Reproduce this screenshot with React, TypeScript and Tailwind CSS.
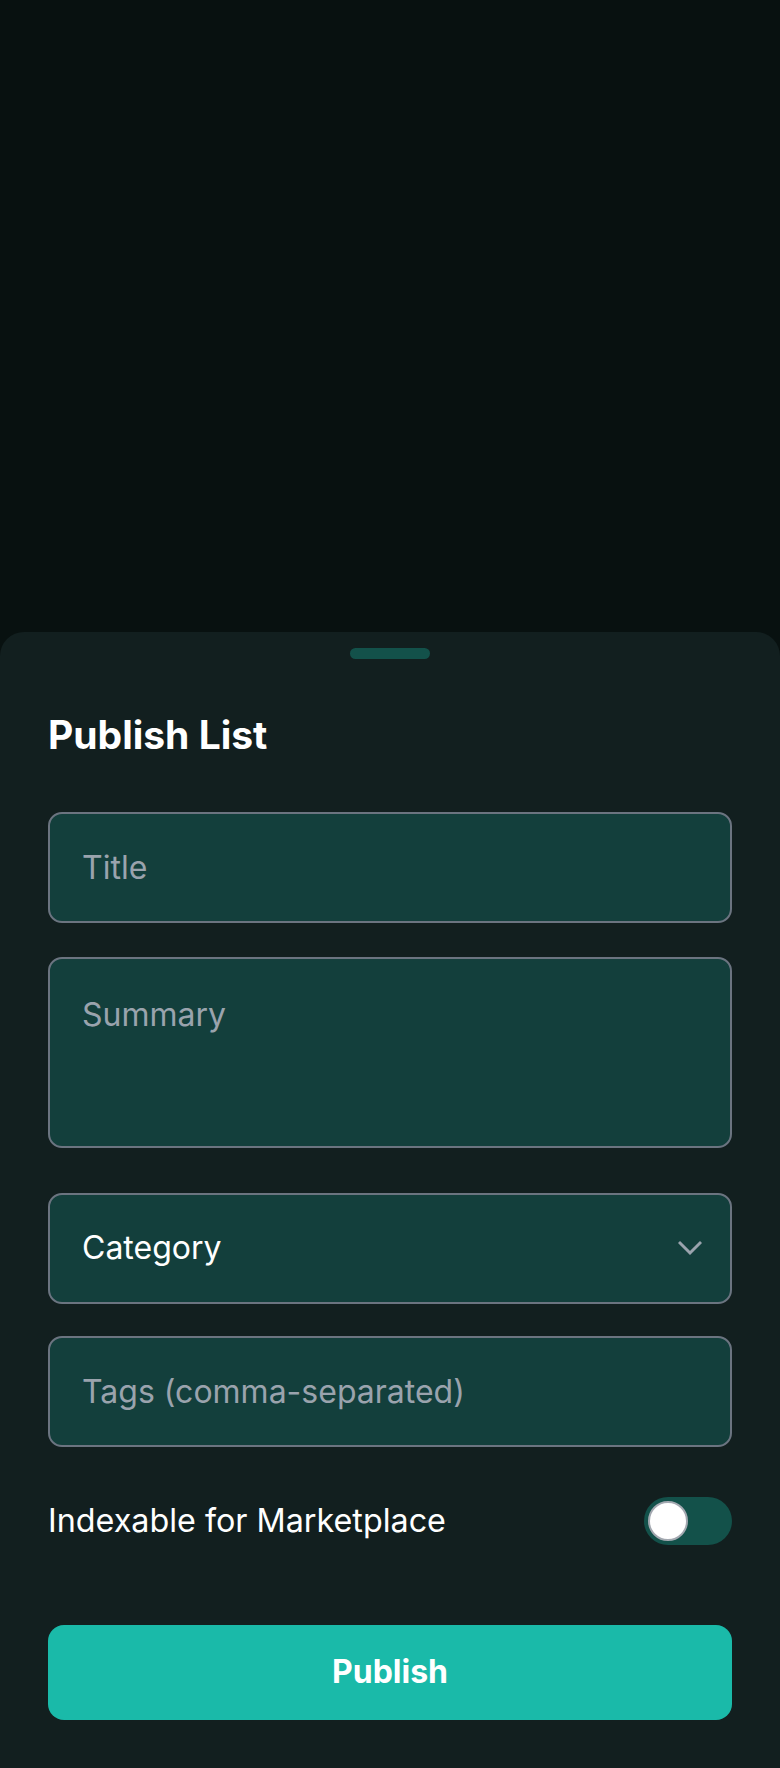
import React, { useState } from 'react';

const inputClass =
    "w-full h-[111px] rounded-[14px] border-2 border-[#6b7480] bg-[#133f3c] pl-[32px] pr-[32px] text-[32px] leading-[40px] text-white placeholder:text-[#9aa3ad] outline-none";

export default function App() {
    const [indexable, setIndexable] = useState(false);

    return (
        <div
            className="min-h-[1768px] flex flex-col bg-[#081110]"
            style={{ fontFamily: 'Inter, "Noto Sans", sans-serif' }}
        >
            {/* empty backdrop above the sheet */}
            <div className="flex-1" />

            {/* Bottom sheet */}
            <div className="h-[1136px] bg-[#121f1f] rounded-t-[24px] px-[48px] pt-[16px] pb-[48px] flex flex-col">
                <div className="w-[80px] h-[11px] rounded-full bg-[#13514a] mx-auto" />

                <h2 className="mt-[52px] text-[39px] leading-[48px] font-bold text-white">
                    Publish List
                </h2>

                <div className="mt-[53px] flex flex-col">
                    <input className={inputClass} placeholder="Title" />

                    <textarea
                        className="mt-[34px] w-full h-[191px] resize-none rounded-[14px] border-2 border-[#6b7480] bg-[#133f3c] px-[32px] pt-[36px] text-[32px] leading-[40px] text-white placeholder:text-[#9aa3ad] outline-none"
                        placeholder="Summary"
                    />

                    {/* Category select */}
                    <button className="mt-[45px] w-full h-[111px] rounded-[14px] border-2 border-[#6b7480] bg-[#133f3c] pl-[32px] pr-[28px] flex items-center justify-between text-[32px] leading-[40px] text-white">
                        <span>Category</span>
                        <svg width="24" height="16" viewBox="0 0 24 16" fill="none">
                            <path d="M2 3l10 10 10-10" stroke="#9aa3ad" strokeWidth="3" strokeLinecap="square" />
                        </svg>
                    </button>

                    <input className={`mt-[32px] ${inputClass}`} placeholder="Tags (comma-separated)" />
                </div>

                {/* Indexable toggle */}
                <div className="mt-[50px] h-[48px] flex items-center justify-between">
                    <span className="text-[32.3px] text-white">Indexable for Marketplace</span>
                    <button
                        onClick={() => setIndexable(!indexable)}
                        className={`w-[88px] h-[48px] rounded-full bg-[#13514a] p-[4px] flex ${indexable ? 'justify-end' : 'justify-start'}`}
                    >
                        <span className="w-[40px] h-[40px] rounded-full bg-white border-2 border-[#a3a8b0]" />
                    </button>
                </div>

                <button className="mt-[80px] h-[96px] w-full rounded-[16px] bg-[#1abaa9] text-white text-[32px] font-bold">
                    Publish
                </button>
            </div>
        </div>
    );
}
